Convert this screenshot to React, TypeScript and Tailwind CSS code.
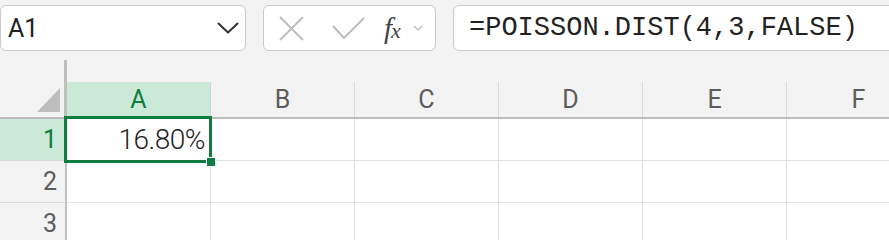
export default function App() {
  const cols = ["B", "C", "D", "E", "F"];
  const hdrFont = "font-['Roboto',_'Liberation_Sans',_sans-serif]";
  return (
    <div className="w-[889px] h-[240px] overflow-hidden bg-[#f3f3f3] select-none">
      {/* top bar */}
      <div className="flex items-start pt-[5px] h-[60px]">
        <div className="w-[246px] h-[46px] shrink-0 bg-white border-[1.5px] border-[#c9c9c9] rounded-[6px] flex items-center justify-between pl-[7px] pr-[6px]">
          <span className={`text-[25px] leading-none text-[#222] ${hdrFont}`}>A1</span>
          <svg width="22" height="12" viewBox="0 0 22 12">
            <path d="M1.5 1.5 L11 10.5 L20.5 1.5" fill="none" stroke="#333" strokeWidth="2" strokeLinecap="round" strokeLinejoin="round" />
          </svg>
        </div>
        <div className="ml-[17px] w-[173px] h-[46px] shrink-0 bg-white border-[1.5px] border-[#c9c9c9] rounded-[6px] flex items-center">
          <svg className="ml-[15px]" width="25" height="25" viewBox="0 0 25 25">
            <path d="M1 1 L24 24 M24 1 L1 24" fill="none" stroke="#bdbdbd" strokeWidth="2" />
          </svg>
          <svg className="ml-[28px]" width="33" height="23" viewBox="0 0 33 23">
            <path d="M1 9 L12 21 L32 1" fill="none" stroke="#bdbdbd" strokeWidth="2" />
          </svg>
          <div className="ml-[19px] flex items-baseline text-[#444] leading-none">
            <span className="italic font-['Liberation_Serif',_serif] text-[29px]">f</span>
            <span className="italic font-['Liberation_Serif',_serif] text-[22px] -ml-[1px]">x</span>
          </div>
          <svg className="ml-[12px]" width="10" height="6" viewBox="0 0 10 6">
            <path d="M1 1 L5 5 L9 1" fill="none" stroke="#bdbdbd" strokeWidth="1.3" />
          </svg>
        </div>
        <div className="ml-[17px] w-[470px] h-[46px] shrink-0 bg-white border-[1.5px] border-[#c9c9c9] rounded-[6px] flex items-center pl-[15px]">
          <span className="text-[27px] leading-none text-[#222] font-['Liberation_Mono',_monospace]">=POISSON.DIST(4,3,FALSE)</span>
        </div>
      </div>

      {/* grid */}
      <div className="flex flex-col">
        <div className="flex h-[22px]">
          <div className="w-[67px] border-r-[3px] border-[#bfbfbf]" />
        </div>
        {/* header row */}
        <div className={`flex h-[37px] border-b-2 border-[#bcbcbc] ${hdrFont}`}>
          <div className="w-[67px] shrink-0 border-r-[3px] border-[#bfbfbf] flex items-end justify-end pr-[4px] pb-[5px]">
            <svg width="23" height="24" viewBox="0 0 23 24">
              <polygon points="23,0 23,24 0,24" fill="#bdbdbd" />
            </svg>
          </div>
          <div className="w-[144px] shrink-0 border-r border-[#d4d4d4] bg-[#caead7] flex items-center justify-center text-[25px] text-[#107c41]">
            A
          </div>
          {cols.map((c) => (
            <div key={c} className="w-[144px] shrink-0 border-r border-[#dadada] flex items-center justify-center text-[25px] text-[#5c5c5c]">
              {c}
            </div>
          ))}
        </div>
        {/* rows */}
        {[1, 2, 3].map((r) => (
          <div key={r} className="flex h-[42px]">
            <div
              className={`w-[67px] shrink-0 border-r-2 border-b border-r-[#bfbfbf] border-b-[#dcdcdc] flex items-center justify-end pr-[8px] text-[25px] ${hdrFont} ${
                r === 1 ? "bg-[#caead7] text-[#107c41]" : "bg-[#f3f3f3] text-[#5c5c5c]"
              }`}
            >
              {r}
            </div>
            <div className="relative w-[144px] shrink-0 bg-white border-r border-b border-[#e1e1e1] flex items-center justify-end pr-[5px]">
              {r === 1 && (
                <>
                  <span className="text-[28px] font-light tracking-[-0.5px] text-[#222] font-['Roboto',_sans-serif] leading-none">16.80%</span>
                  <div className="absolute z-10 -left-[3px] -top-[3px] -right-[2px] -bottom-[3px] border-[3px] border-[#107c41] pointer-events-none" />
                  <div className="absolute z-20 -right-[6px] -bottom-[7px] w-[10px] h-[10px] bg-[#107c41] border border-white" />
                </>
              )}
            </div>
            {cols.map((c) => (
              <div key={c} className="w-[144px] shrink-0 bg-white border-r border-b border-[#e1e1e1]" />
            ))}
          </div>
        ))}
      </div>
    </div>
  );
}
